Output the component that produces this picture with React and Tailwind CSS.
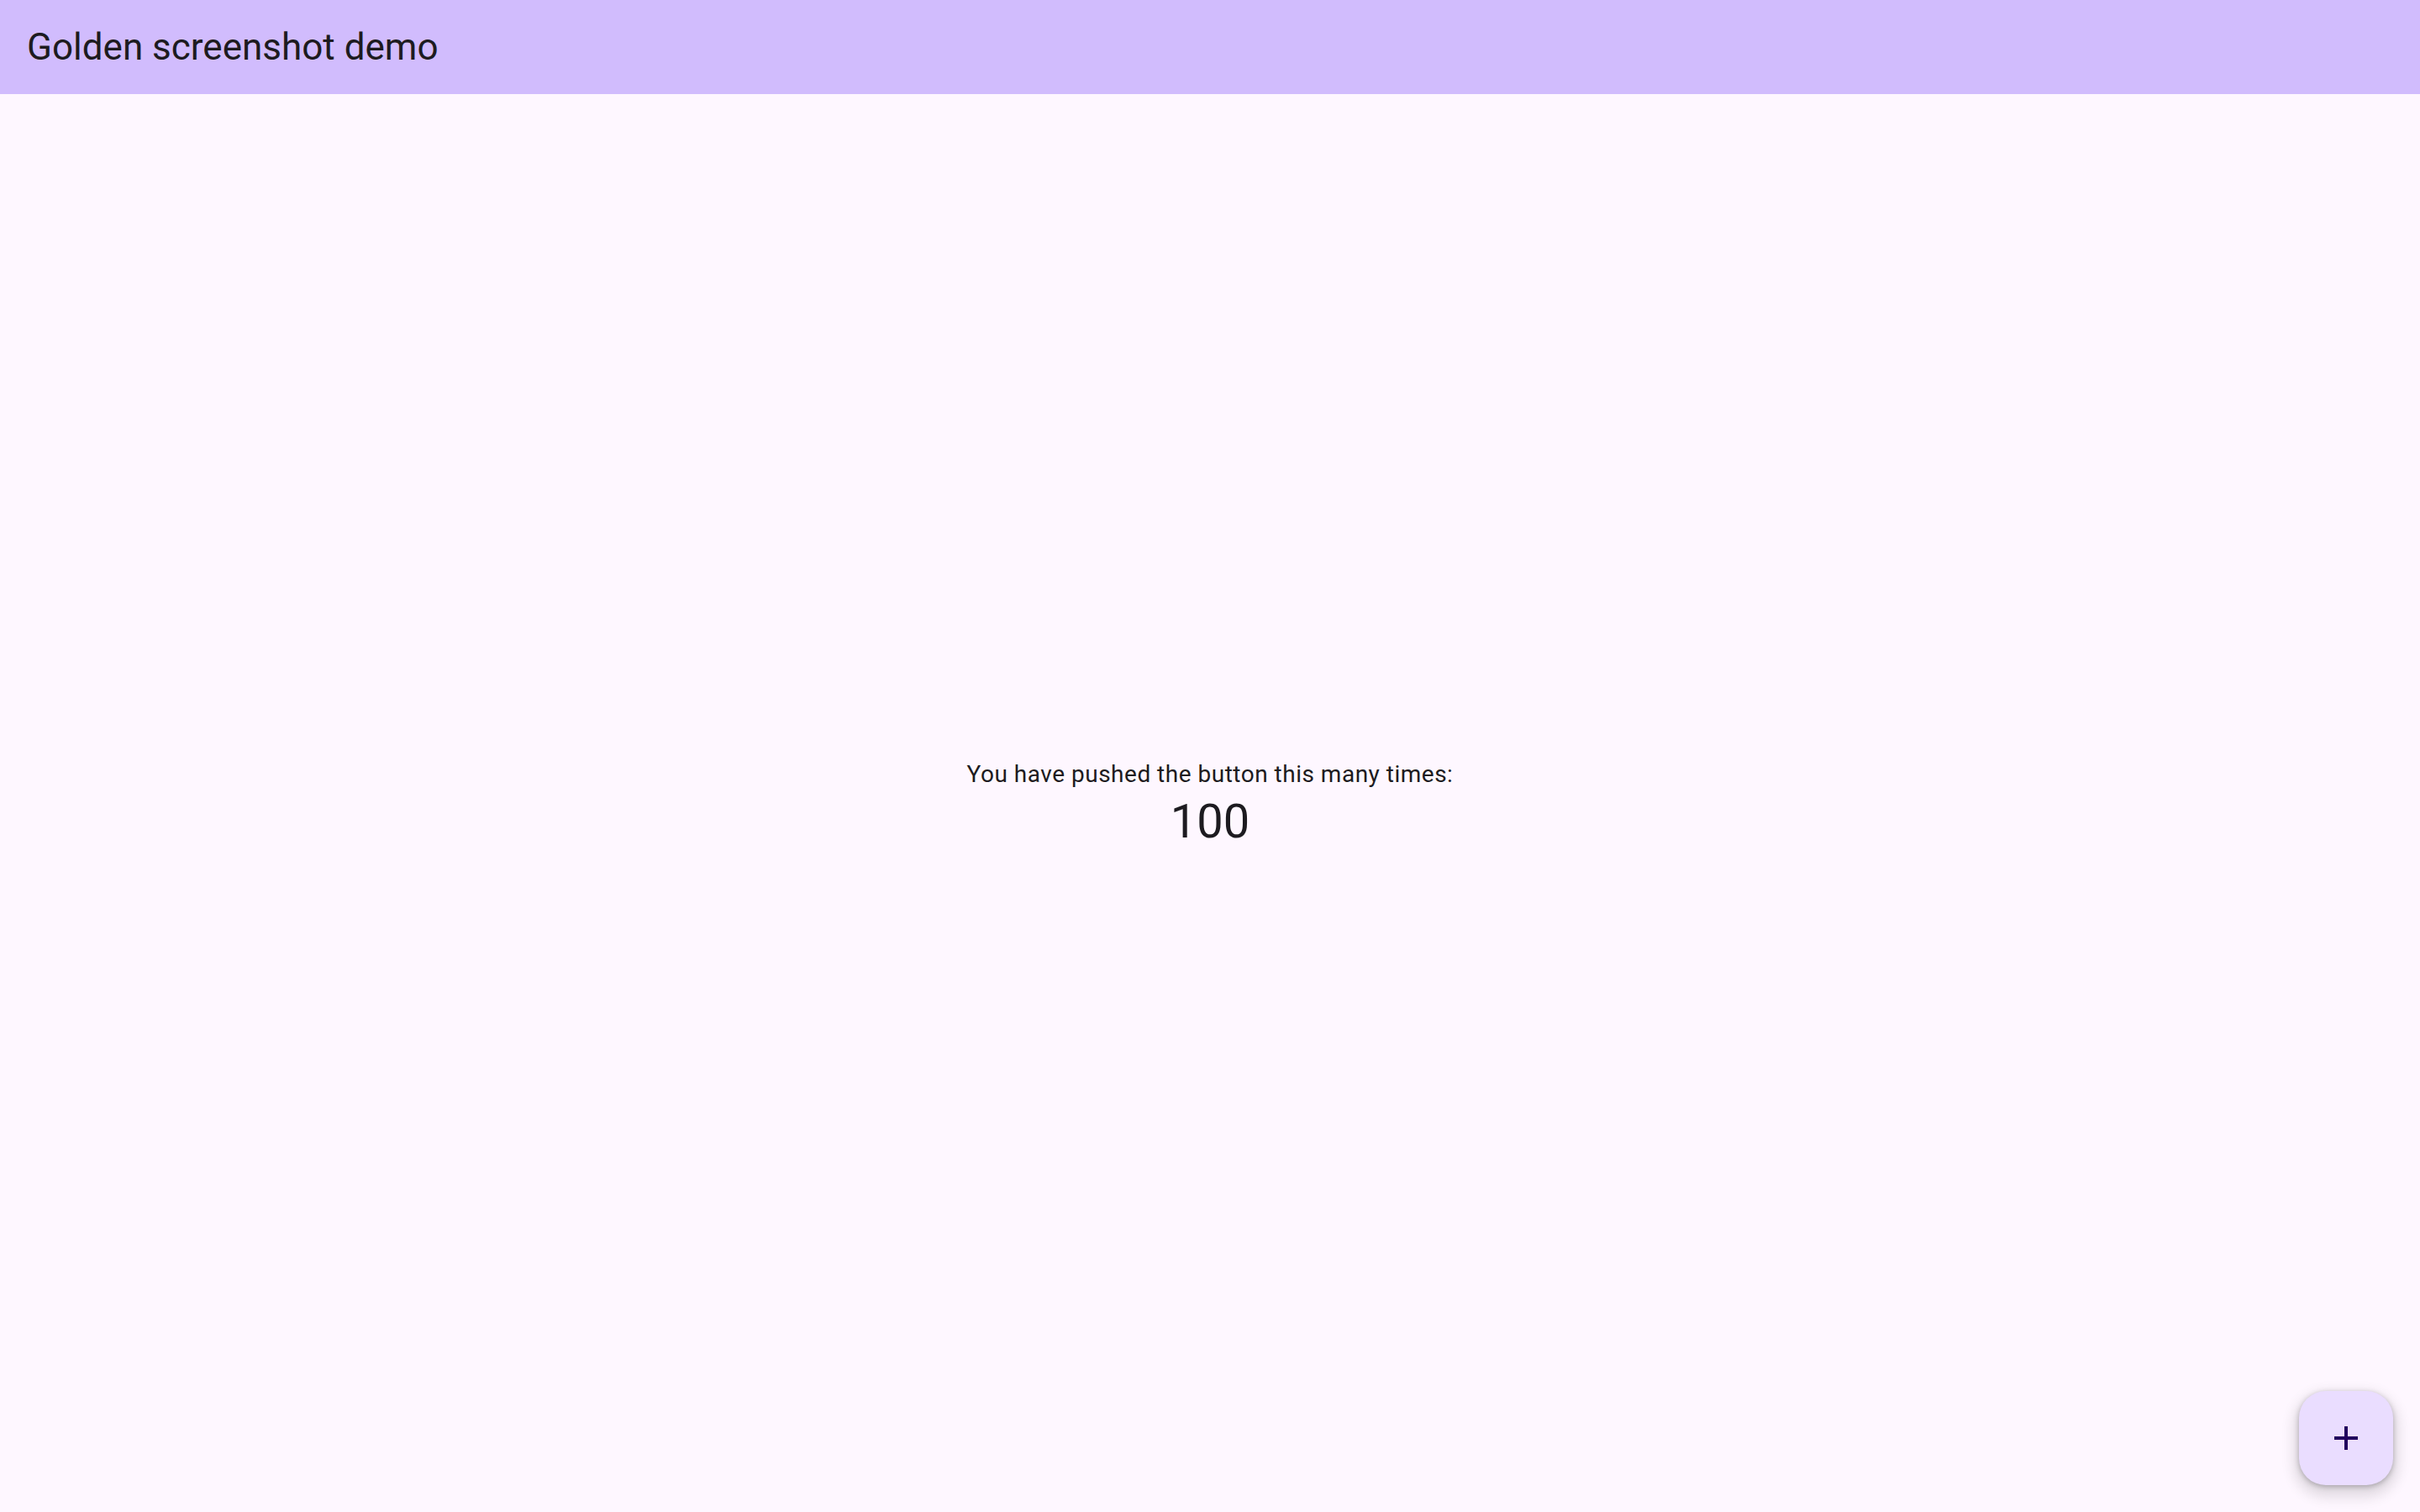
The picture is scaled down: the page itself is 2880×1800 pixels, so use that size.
function AddIcon() {
  return (
    <svg viewBox="0 0 24 24" className="h-12 w-12" fill="#21005D">
      <path d="M19 13h-6v6h-2v-6H5v-2h6V5h2v6h6v2z" />
    </svg>
  )
}

export default function App() {
  return (
    <div className="relative flex h-screen w-full flex-col bg-[#FEF7FF] font-['Roboto',sans-serif] text-[#1D1B20]">
      {/* app bar */}
      <header className="flex h-[112px] shrink-0 items-center bg-[#D1BCFD] px-8">
        <h1 className="text-[44px] leading-[56px]">Golden screenshot demo</h1>
      </header>

      <main className="flex flex-1 flex-col items-center justify-center pt-1">
        <p className="text-[28px] leading-[40px] tracking-[0.5px]">You have pushed the button this many times:</p>
        <p className="text-[56px] leading-[72px]">100</p>
      </main>

      <button
        className="absolute right-8 bottom-8 flex h-[112px] w-[112px] items-center justify-center rounded-[32px] bg-[#EADDFF] shadow-[0_8px_16px_6px_rgba(0,0,0,0.12),0_2px_6px_rgba(0,0,0,0.25)]"
        aria-label="Increment"
      >
        <AddIcon />
      </button>
    </div>
  )
}
